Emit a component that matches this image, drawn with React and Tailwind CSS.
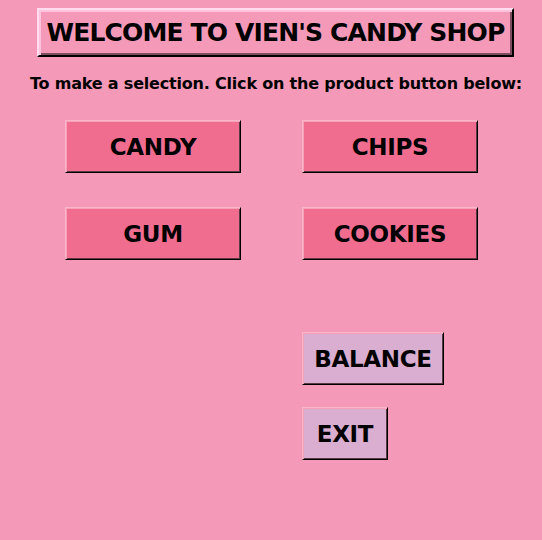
import React from "react";

const products = ["CANDY", "CHIPS", "GUM", "COOKIES"];

function RaisedButton({ label, className }) {
  return (
    <button
      className={
        "h-[53px] pt-[2px] border border-t-[#f9b6c9] border-l-[#f9b6c9] border-b-black border-r-black shadow-[inset_1px_1px_0_#f8a0b8,inset_-1px_-1px_0_#5a3a44] font-bold text-[23px] text-black tracking-[-0.3px] " +
        className
      }
    >
      {label}
    </button>
  );
}

export default function App() {
  return (
    <div
      className="w-[542px] h-[540px] bg-[#f49ab8] flex flex-col"
      style={{ fontFamily: "'DejaVu Sans', Verdana, sans-serif" }}
    >
      <div className="pt-[8px] pl-[37px]">
        <div className="w-[477px] h-[49px] flex items-center justify-center border-[2px] border-t-[#ffdcef] border-l-[#ffdcef] border-b-black border-r-black shadow-[inset_2px_2px_0_#fbc3dc,inset_-2px_-2px_0_#7e4d60] bg-[#f49ab8]">
          <span className="font-bold text-[25px] tracking-[-0.85px] text-black">
            WELCOME TO VIEN'S CANDY SHOP
          </span>
        </div>
      </div>

      <p className="mt-[15px] text-center pl-[10px] font-bold text-[16px] leading-[24px] tracking-[-0.2px] text-black">
        To make a selection. Click on the product button below:
      </p>

      <div className="mt-[24px] pl-[65px] grid grid-cols-[176px_176px] gap-x-[61px] gap-y-[34px]">
        {products.map((p) => (
          <RaisedButton key={p} label={p} className="w-[176px] bg-[#f16d8f]" />
        ))}
      </div>

      <div className="mt-[72px] pl-[302px] flex flex-col items-start gap-[22px]">
        <RaisedButton label="BALANCE" className="w-[142px] bg-[#d9aed0]" />
        <RaisedButton label="EXIT" className="w-[86px] bg-[#d9aed0]" />
      </div>
    </div>
  );
}
